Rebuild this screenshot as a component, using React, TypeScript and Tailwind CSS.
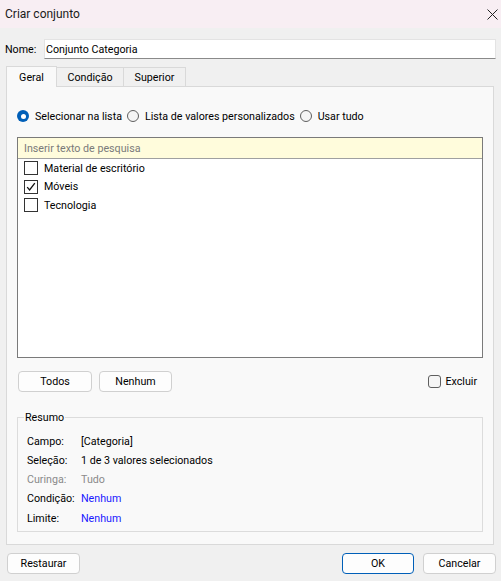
import React from 'react';

const font = { fontFamily: 'Roboto, "Noto Sans", sans-serif' };

const Radio = ({ checked, label }: { checked?: boolean; label: string }) => (
  <label className="flex items-center gap-[6px]">
    {checked ? (
      <span className="w-[12px] h-[12px] rounded-full bg-[#005fb8] flex items-center justify-center">
        <span className="w-[5px] h-[5px] rounded-full bg-white" />
      </span>
    ) : (
      <span className="w-[12px] h-[12px] rounded-full border border-[#5f5f5f] bg-[#f5f5f5]" />
    )}
    <span>{label}</span>
  </label>
);

const Check = ({ checked }: { checked?: boolean }) => (
  <span className="w-[14px] h-[14px] border border-[#333] bg-white flex items-center justify-center shrink-0">
    {checked && (
      <svg width="12" height="12" viewBox="0 0 12 12">
        <polyline points="2.2,6.2 4.6,9 9.8,2.2" fill="none" stroke="#111" strokeWidth="1.3" />
      </svg>
    )}
  </span>
);

const Btn = ({ children, w, primary }: { children: React.ReactNode; w: string; primary?: boolean }) => (
  <button
    className={`${w} h-[21px] rounded-[4px] bg-[#fdfdfd] text-black flex items-center justify-center ${
      primary ? 'border border-[#005fb8]' : 'border border-[#d0d0d0]'
    }`}
  >
    {children}
  </button>
);

const Row = ({ label, value, dim, link }: { label: string; value: string; dim?: boolean; link?: boolean }) => (
  <div className={`flex h-[19.25px] items-center ${dim ? 'text-[#8a8a8a]' : 'text-black'}`}>
    <span className="w-[54px]">{label}</span>
    <span className={link ? 'text-[#1a1aff]' : ''}>{value}</span>
  </div>
);

export default function App() {
  const items = [
    { name: 'Material de escritório', checked: false },
    { name: 'Móveis', checked: true },
    { name: 'Tecnologia', checked: false },
  ];

  return (
    <div
      style={font}
      className="w-[501px] h-[581px] bg-[#f0f0f0] flex flex-col text-[10.7px] leading-[15px] text-black overflow-hidden"
    >
      {/* title bar */}
      <div className="h-[28px] bg-[#f8eef3] flex items-center justify-between pl-[5px] pr-[3px] shrink-0">
        <span className="text-[12px] text-[#1a1a1a]">Criar conjunto</span>
        <svg width="11" height="11" viewBox="0 0 11 11">
          <path d="M0.5 0.5 L10.5 10.5 M10.5 0.5 L0.5 10.5" stroke="#222" strokeWidth="1" />
        </svg>
      </div>

      {/* name */}
      <div className="flex items-center mt-[11px] pl-[5px] pr-[5px] h-[20px]">
        <span className="w-[39px]">Nome:</span>
        <div className="flex-1 h-[20px] bg-white border border-[#e3e3e3] border-b-[#8a8a8a] flex items-center pl-[1px]">
          Conjunto Categoria
        </div>
      </div>

      {/* tabs */}
      <div className="flex items-end pl-[6px] mt-[7px] h-[20px]">
        <div className="w-[51px] h-[21px] bg-[#f9f9f9] border border-[#d9d9d9] border-b-0 flex items-center justify-center relative top-[1px] z-10">
          Geral
        </div>
        <div className="w-[67px] h-[19px] bg-[#f0f0f0] border border-[#d9d9d9] border-b-0 border-l-0 flex items-center justify-center">
          Condição
        </div>
        <div className="w-[62px] h-[19px] bg-[#f0f0f0] border border-[#d9d9d9] border-b-0 border-l-0 flex items-center justify-center">
          Superior
        </div>
      </div>

      {/* panel */}
      <div className="ml-[6px] w-[488px] h-[459px] bg-[#f9f9f9] border border-[#d9d9d9] flex flex-col px-[10px]">
        <div className="flex items-center gap-[5px] mt-[21px] h-[16px]">
          <Radio checked label="Selecionar na lista" />
          <Radio label="Lista de valores personalizados" />
          <Radio label="Usar tudo" />
        </div>

        <div className="mt-[13px] h-[221px] border border-[#7a7a7a] bg-white flex flex-col">
          <div className="h-[21px] bg-[#fffcdc] border-b border-[#a0a0a0] flex items-center pl-[6px] text-[#7a7a7a] shrink-0">
            Inserir texto de pesquisa
          </div>
          <div className="flex flex-col pl-[6px]">
            {items.map((it) => (
              <div key={it.name} className="flex items-center gap-[6px] h-[18.5px]">
                <Check checked={it.checked} />
                <span>{it.name}</span>
              </div>
            ))}
          </div>
        </div>

        <div className="flex items-center mt-[13px] h-[21px] pl-[1px]">
          <Btn w="w-[74px]">Todos</Btn>
          <div className="w-[7px]" />
          <Btn w="w-[73px]">Nenhum</Btn>
          <div className="flex-1" />
          <label className="flex items-center gap-[4px] mr-[6px]">
            <span className="w-[13px] h-[13px] rounded-[3px] border border-[#5f5f5f] bg-[#f5f5f5]" />
            <span>Excluir</span>
          </label>
        </div>

        <div className="relative mt-[25px] h-[115px] border border-[#dcdcdc] pl-[9px] pt-[13.5px]">
          <span className="absolute -top-[8px] left-[6px] bg-[#f9f9f9] px-[1px] leading-[15px]">Resumo</span>
          <Row label="Campo:" value="[Categoria]" />
          <Row label="Seleção:" value="1 de 3 valores selecionados" />
          <Row label="Curinga:" value="Tudo" dim />
          <Row label="Condição:" value="Nenhum" link />
          <Row label="Limite:" value="Nenhum" link />
        </div>
      </div>

      {/* footer */}
      <div className="flex items-center mt-[8px] pl-[7px] pr-[5px]">
        <Btn w="w-[73px]">Restaurar</Btn>
        <div className="flex-1" />
        <Btn w="w-[72px]" primary>OK</Btn>
        <div className="w-[9px]" />
        <Btn w="w-[73px]">Cancelar</Btn>
      </div>
    </div>
  );
}
